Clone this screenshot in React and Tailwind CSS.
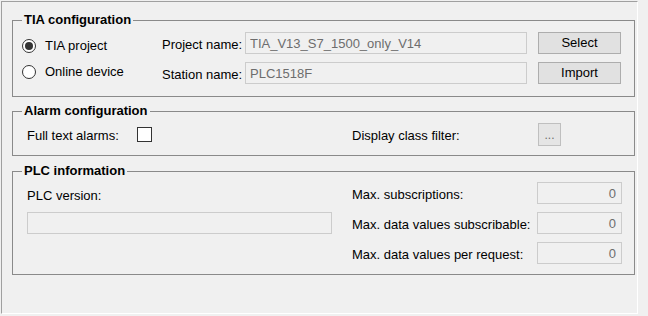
import React from 'react';

// WinForms-like settings pane: three group boxes (TIA, alarms, PLC info).
const field = 'h-[22px] border border-[#cccccc] bg-[#f0f0f0] text-[#6d6d6d] text-[13px] outline-none';
const btn = 'h-[22px] w-[83px] border border-[#adadad] bg-[#e1e1e1] text-[13px] text-black';

const Group = ({ title, className, children }) => (
  <fieldset className={`w-[623px] border border-[#8a8a8a] ${className}`}>
    <legend className="ml-[9px] px-[2px] font-bold leading-[16px]">{title}</legend>
    {children}
  </fieldset>
);

const Radio = ({ checked, label, className }) => (
  <label className={`flex items-center gap-[9px] h-[16px] self-start ${className}`}>
    <span className="w-[14px] h-[14px] rounded-full border border-[#333333] bg-white flex items-center justify-center">
      {checked && <span className="w-[8px] h-[8px] rounded-full bg-[#333333]" />}
    </span>
    <span className="leading-[16px]">{label}</span>
  </label>
);

const NumBox = ({ value }) => (
  <input readOnly value={value} className={`${field} w-[85px] text-right pr-[5px]`} />
);

export default function App() {
  return (
    <div className="w-[648px] h-[316px] bg-[#f0f0f0] pl-px pt-px font-['Liberation_Sans',Arial,sans-serif] text-[13px] text-black">
      <div className="w-[637px] h-[313px] border border-[#a0a0a0] border-r-white border-b-white pl-[10px] pt-[10px]">
        <Group title="TIA configuration" className="h-[85px]">
          <div className="grid grid-cols-[140px_83px_293px_83px] grid-rows-[22px_22px] gap-y-[8px] pl-[9px] pt-[4px]">
            <Radio checked label="TIA project" className="mt-[6px]" />
            <span className="self-start mt-[5px] leading-[16px]">Project name:</span>
            <input readOnly value="TIA_V13_S7_1500_only_V14" className={`${field} w-[282px] pl-[4px]`} />
            <button className={btn}>Select</button>
            <Radio label="Online device" className="mt-[2px]" />
            <span className="self-start mt-[5px] leading-[16px]">Station name:</span>
            <input readOnly value="PLC1518F" className={`${field} w-[282px] pl-[4px]`} />
            <button className={btn}>Import</button>
          </div>
        </Group>

        <Group title="Alarm configuration" className="h-[53px] mt-[6px]">
          <div className="grid grid-cols-[110px_215px_186px_23px] pl-[14px] pt-[4px] items-start">
            <span className="mt-[5px] leading-[16px]">Full text alarms:</span>
            <span className="mt-[4px] w-[15px] h-[15px] border border-[#333333] bg-white" />
            <span className="mt-[5px] leading-[16px]">Display class filter:</span>
            <button className="w-[23px] h-[23px] border border-[#bfbfbf] bg-[#e5e5e5] text-[#6d6d6d] text-[12px] leading-[18px]">...</button>
          </div>
        </Group>

        <Group title="PLC information" className="h-[112px] mt-[7px]">
          <div className="grid grid-cols-[325px_185px_85px] grid-rows-[22px_22px_22px] gap-y-[8px] pl-[14px] pt-[3px] items-start">
            <span className="mt-[6px] leading-[16px]">PLC version:</span>
            <span className="mt-[5px] leading-[16px]">Max. subscriptions:</span>
            <NumBox value="0" />
            <input readOnly value="" className={`${field} w-[305px]`} />
            <span className="mt-[5px] leading-[16px]">Max. data values subscribable:</span>
            <NumBox value="0" />
            <span />
            <span className="mt-[5px] leading-[16px]">Max. data values per request:</span>
            <NumBox value="0" />
          </div>
        </Group>
      </div>
    </div>
  );
}
